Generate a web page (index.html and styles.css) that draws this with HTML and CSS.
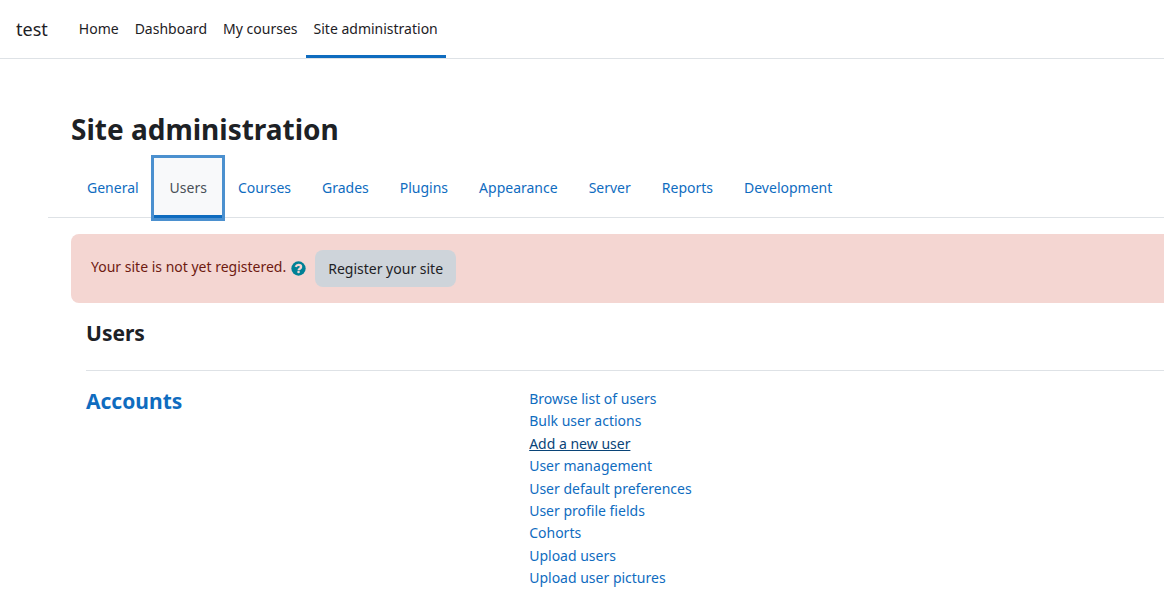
FILE: index.html
```html
<!DOCTYPE html>
<html lang="en">
<head>
<meta charset="utf-8">
<meta name="viewport" content="width=device-width, initial-scale=1">
<title>Site administration</title>
<link rel="stylesheet" href="styles.css">
</head>
<body>
<header class="navbar">
  <a class="brand" href="#">test</a>
  <nav class="primary-nav" aria-label="Primary">
    <a class="nav-link" href="#">Home</a>
    <a class="nav-link" href="#">Dashboard</a>
    <a class="nav-link" href="#">My courses</a>
    <a class="nav-link current" href="#" aria-current="page">Site administration</a>
  </nav>
</header>
<main class="page">
  <h1 class="page-title">Site administration</h1>
  <nav class="tabs" aria-label="Site administration">
    <a class="tab" href="#">General</a>
    <a class="tab selected" href="#" aria-current="true">Users</a>
    <a class="tab" href="#">Courses</a>
    <a class="tab" href="#">Grades</a>
    <a class="tab" href="#">Plugins</a>
    <a class="tab" href="#">Appearance</a>
    <a class="tab" href="#">Server</a>
    <a class="tab" href="#">Reports</a>
    <a class="tab" href="#">Development</a>
  </nav>
  <div class="alert" role="alert">
    <span class="alert-text">Your site is not yet registered.</span>
    <a class="help" href="#" aria-label="Help">
      <svg class="help-icon" viewBox="0 0 512 512" aria-hidden="true"><circle cx="256" cy="256" r="244" fill="#008196"/><path fill="none" stroke="#f4d6d2" stroke-width="80" d="M160 200c18-44 54-66 98-66 50 0 86 28 86 70 0 58-84 58-84 112"/><circle cx="258" cy="378" r="44" fill="#f4d6d2"/></svg>
    </a>
    <button class="register" type="button">Register your site</button>
  </div>
  <section class="panel">
    <h2 class="heading">Users</h2>
    <hr class="rule">
    <div class="category">
      <h3 class="heading"><a class="link" href="#">Accounts</a></h3>
      <ul class="links">
        <li><a class="link" href="#">Browse list of users</a></li>
        <li><a class="link" href="#">Bulk user actions</a></li>
        <li><a class="link hovered" href="#">Add a new user</a></li>
        <li><a class="link" href="#">User management</a></li>
        <li><a class="link" href="#">User default preferences</a></li>
        <li><a class="link" href="#">User profile fields</a></li>
        <li><a class="link" href="#">Cohorts</a></li>
        <li><a class="link" href="#">Upload users</a></li>
        <li><a class="link" href="#">Upload user pictures</a></li>
      </ul>
    </div>
  </section>
</main>
</body>
</html>
```
FILE: styles.css
```css
* { box-sizing: border-box; }

body {
  margin: 0;
  background: #fff;
  color: #1d2125;
  font: 14px/1.6 "Segoe UI", "Noto Sans", "Open Sans", sans-serif;
}

a { text-decoration: none; }

.navbar {
  display: flex;
  align-items: stretch;
  min-height: 59px;
  padding: 0 16px;
  border-bottom: 1px solid #dee2e6;
}

.brand {
  display: flex;
  align-items: center;
  margin-right: 23px;
  color: #1d2125;
  font-size: 18px;
}

.primary-nav { display: flex; }

.nav-link {
  display: flex;
  align-items: center;
  padding: 3px 8px 0;
  border-bottom: 3px solid transparent;
  color: #1d2125;
}

.nav-link.current { border-bottom-color: #0f6cbf; }

.page { padding: 48px 0 16px 71px; }

.page-title {
  margin: 0;
  font-size: 28px;
  line-height: 45px;
}

.tabs {
  display: flex;
  margin: 6px 0 16px -23px;
  padding-left: 23px;
  border-bottom: 1px solid #dee2e6;
}

.tab {
  display: flex;
  align-items: center;
  height: 60px;
  margin-bottom: -1px;
  padding: 3px 15px 0 16px;
  border-bottom: 3px solid transparent;
  color: #0f6cbf;
}

.tab.selected {
  background: #f8f9fa;
  border-bottom-color: #0f6cbf;
  box-shadow: 0 0 0 3px #4b90cf;
  color: #495057;
}

.alert {
  display: flex;
  align-items: flex-start;
  padding: 16px 20px;
  border-radius: 8px 0 0 8px;
  background: #f4d6d2;
  color: #6e1a11;
}

.alert-text { padding-top: 6px; }

.help { padding: 11px 9px 0 5px; }

.help-icon {
  display: block;
  width: 15px;
  height: 15px;
}

.register {
  padding: 8px 13px;
  border: 0;
  border-radius: 8px;
  background: #ced4da;
  color: #1d2125;
  font: inherit;
  line-height: 21px;
}

.panel { padding: 16px 0 0 15px; }

.heading {
  margin: 0;
  font-size: 21px;
  line-height: 28px;
}

.rule {
  margin: 23px 0 16px;
  border: 0;
  border-top: 1px solid #dee2e6;
}

.category {
  display: grid;
  grid-template-columns: 37fr 53fr;
}

.links {
  margin: 0;
  padding: 1px 0 0;
  list-style: none;
}

.link { color: #0f6cbf; }

.link.hovered {
  color: #094478;
  text-decoration: underline;
}
```
